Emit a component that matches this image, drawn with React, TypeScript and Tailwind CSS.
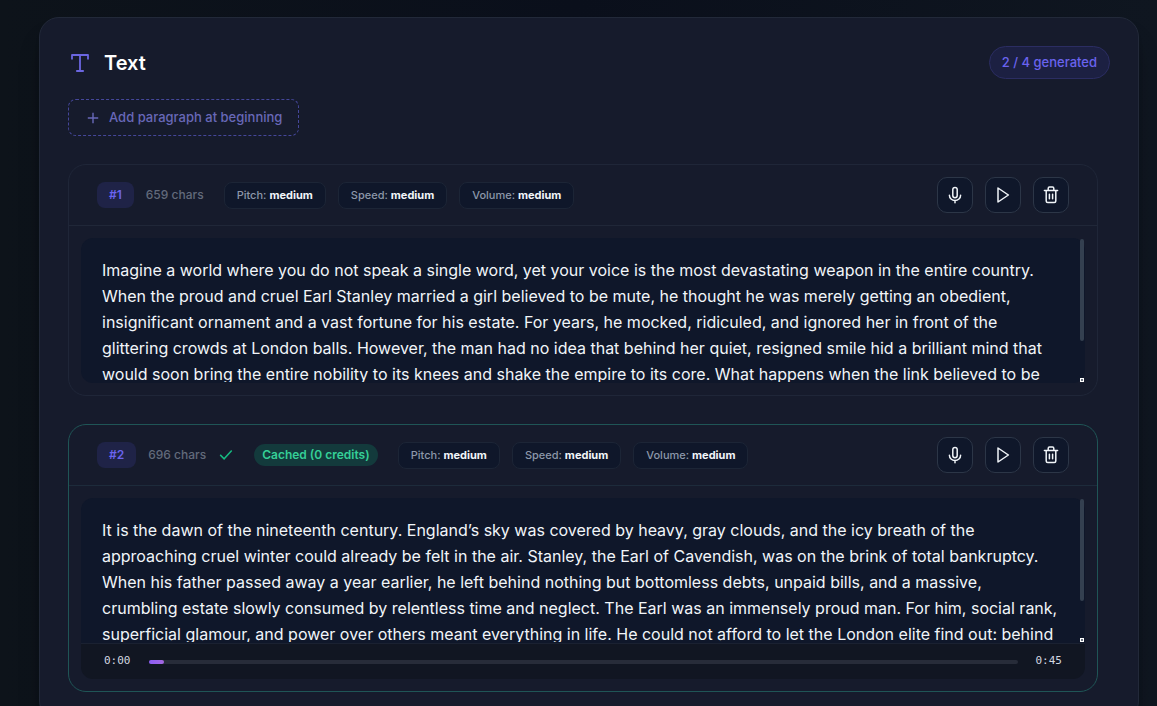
import React, { useState } from 'react';

type IconProps = { className?: string };

type Paragraph = {
  id: number;
  chars: number;
  cached: boolean;
  duration: number | null;
  text: string;
};

const PARAGRAPHS: Paragraph[] = [
  {
    id: 1,
    chars: 659,
    cached: false,
    duration: null,
    text: 'Imagine a world where you do not speak a single word, yet your voice is the most devastating weapon in the entire country. When the proud and cruel Earl Stanley married a girl believed to be mute, he thought he was merely getting an obedient, insignificant ornament and a vast fortune for his estate. For years, he mocked, ridiculed, and ignored her in front of the glittering crowds at London balls. However, the man had no idea that behind her quiet, resigned smile hid a brilliant mind that would soon bring the entire nobility to its knees and shake the empire to its core. What happens when the link believed to be',
  },
  {
    id: 2,
    chars: 696,
    cached: true,
    duration: 45,
    text: 'It is the dawn of the nineteenth century. England’s sky was covered by heavy, gray clouds, and the icy breath of the approaching cruel winter could already be felt in the air. Stanley, the Earl of Cavendish, was on the brink of total bankruptcy. When his father passed away a year earlier, he left behind nothing but bottomless debts, unpaid bills, and a massive, crumbling estate slowly consumed by relentless time and neglect. The Earl was an immensely proud man. For him, social rank, superficial glamour, and power over others meant everything in life. He could not afford to let the London elite find out: behind',
  },
];

const VOICE_SETTINGS = [
  { label: 'Pitch', value: 'medium' },
  { label: 'Speed', value: 'medium' },
  { label: 'Volume', value: 'medium' },
];

const TextIcon = ({ className }: IconProps) => (
  <svg viewBox="0 0 24 24" fill="none" stroke="currentColor" strokeWidth="1.8" strokeLinejoin="round" className={className}>
    <path d="M4 8.6V4h16v4.6M12 4v16M8.2 20h7.6" />
  </svg>
);

const PlusIcon = ({ className }: IconProps) => (
  <svg viewBox="0 0 16 16" fill="none" stroke="currentColor" strokeWidth="1.4" className={className}>
    <path d="M8 2.8v10.4M2.8 8h10.4" />
  </svg>
);

const CheckIcon = ({ className }: IconProps) => (
  <svg viewBox="0 0 16 16" fill="none" stroke="currentColor" strokeWidth="1.5" className={className}>
    <path d="M2.2 7.9l3.9 3.9 7.6-8.2" />
  </svg>
);

const MicIcon = ({ className }: IconProps) => (
  <svg viewBox="0 0 18 18" fill="none" stroke="currentColor" strokeWidth="1.5" strokeLinecap="round" className={className}>
    <rect x="6.8" y="1.4" width="4.4" height="10.4" rx="2.2" />
    <path d="M3.4 9.2a5.6 5.3 0 0 0 11.2 0M9 14.6v2.2" />
  </svg>
);

const PlayIcon = ({ className }: IconProps) => (
  <svg viewBox="0 0 18 18" fill="none" stroke="currentColor" strokeWidth="1.5" strokeLinejoin="round" className={className}>
    <path d="M4 2v14l10.4-7z" />
  </svg>
);

const TrashIcon = ({ className }: IconProps) => (
  <svg viewBox="0 0 18 18" fill="none" stroke="currentColor" strokeWidth="1.5" strokeLinecap="round" className={className}>
    <path d="M2.4 4.4h13.2M6.2 4.2V2.4c0-.8.5-1.3 1.3-1.3h3c.8 0 1.3.5 1.3 1.3v1.8M4.2 4.6v10.3c0 .9.6 1.5 1.5 1.5h6.6c.9 0 1.5-.6 1.5-1.5V4.6M7.4 8.2v4.6M10.6 8.2v4.6" />
  </svg>
);

const ACTIONS = [
  { id: 'record', label: 'Choose voice', icon: MicIcon },
  { id: 'play', label: 'Play', icon: PlayIcon },
  { id: 'delete', label: 'Delete', icon: TrashIcon },
];

const formatTime = (seconds: number) =>
  `${Math.floor(seconds / 60)}:${String(Math.floor(seconds % 60)).padStart(2, '0')}`;

function Player({ duration }: { duration: number }) {
  const [time, setTime] = useState(0);
  // a small piece of the bar stays filled at the start
  const percent = Math.max(1.8, (time / duration) * 100);

  return (
    <div className="flex h-9 items-center gap-[18px] rounded-b-xl border-t border-[#1a2131] bg-[#111622] px-[23px] font-['DejaVu_Sans_Mono',monospace] text-[11px] text-[#d3d8e0]">
      <span>{formatTime(time)}</span>
      <div className="relative h-1 flex-1 rounded-full bg-[#272c39]">
        <div
          className="h-1 rounded-full bg-linear-to-r from-[#8b5cf6] to-[#a467e0]"
          style={{ width: `${percent}%` }}
        />
        <input
          type="range"
          aria-label="Seek"
          min={0}
          max={duration}
          value={time}
          onChange={e => setTime(Number(e.target.value))}
          className="absolute inset-0 h-1 w-full cursor-pointer opacity-0"
        />
      </div>
      <span>{formatTime(duration)}</span>
    </div>
  );
}

function ParagraphEditor({ paragraph }: { paragraph: Paragraph }) {
  const [text, setText] = useState(paragraph.text);
  const [scroll, setScroll] = useState(0);

  return (
    <div className="relative">
      <textarea
        aria-label={`Paragraph ${paragraph.id}`}
        value={text}
        onChange={e => setText(e.target.value)}
        onScroll={e => {
          const el = e.currentTarget;
          setScroll(el.scrollTop / Math.max(1, el.scrollHeight - el.clientHeight));
        }}
        className={`block h-[145px] w-full resize-none [scrollbar-width:none] border border-transparent bg-[#0f172a] pt-[18px] pr-[26px] pb-[45px] pl-5 text-base leading-[26px] text-[#f1f5f9] outline-none ${
          paragraph.duration ? 'rounded-t-xl' : 'rounded-xl'
        }`}
      />
      {/* scroll thumb and resize corner */}
      <div
        className="pointer-events-none absolute top-px right-px h-[102px] w-1 rounded-full bg-[#344050]"
        style={{ transform: `translateY(${scroll * 36}px)` }}
      />
      <div className="pointer-events-none absolute right-px bottom-px flex size-1 items-center justify-center bg-white">
        <div className="size-0.5 bg-[#6b7280]" />
      </div>
    </div>
  );
}

function ParagraphCard({ paragraph }: { paragraph: Paragraph }) {
  return (
    <article className={`rounded-[18px] border ${paragraph.cached ? 'border-[#1f5556]' : 'border-[#1f2638]'}`}>
      <div className={`flex items-center justify-between border-b px-7 py-3 ${paragraph.cached ? 'border-[#1d2b3b]' : 'border-[#202738]'}`}>
        <div className="flex items-center gap-5">
          <div className="flex items-center gap-3 text-xs font-medium">
            <span className="flex h-[26px] items-center rounded-lg bg-[#1f2347] px-3 font-semibold text-[#6a63ee]">
              #{paragraph.id}
            </span>
            <span className="text-[#626a7b]">{paragraph.chars} chars</span>
            {paragraph.cached && <CheckIcon className="size-4 text-[#16b981]" />}
          </div>
          {paragraph.cached && (
            <span className="flex h-[22px] items-center rounded-full bg-[#133a3c] px-2 text-xs font-semibold text-[#35cf97]">
              Cached (0 credits)
            </span>
          )}
          <div className="flex gap-3">
            {VOICE_SETTINGS.map(s => (
              <span
                key={s.label}
                className="flex h-[27px] items-center gap-[3px] rounded-lg border border-[#1c2536] bg-[#0f172a] px-3 text-[11px] font-medium text-[#8c97a9]"
              >
                {s.label}: <strong className="font-bold text-[#f1f5f9]">{s.value}</strong>
              </span>
            ))}
          </div>
        </div>
        <div className="flex gap-3">
          {ACTIONS.map(a => (
            <button
              key={a.id}
              aria-label={a.label}
              className="flex size-9 items-center justify-center rounded-[10px] border border-[#2c3647] bg-[#0f172a] text-[#f1f5f9] hover:bg-[#1a2338]"
            >
              <a.icon className="size-[18px]" />
            </button>
          ))}
        </div>
      </div>
      <div className="p-3">
        <ParagraphEditor paragraph={paragraph} />
        {paragraph.duration && <Player duration={paragraph.duration} />}
      </div>
    </article>
  );
}

export default function App() {
  return (
    <div className="min-h-screen overflow-hidden bg-linear-to-r from-[#0d131a] via-[#0a0f1b] to-[#0f1620] pt-[17px] pr-[18px] pl-[39px] font-[Inter,sans-serif]">
      <main className="rounded-[20px] border border-[#222939] bg-[#161b2c] p-7 shadow-xl shadow-black/30">
        <header className="flex items-center justify-between">
          <h1 className="flex items-center gap-3 text-xl font-semibold text-white">
            <TextIcon className="size-6 text-[#6b66e0]" />
            Text
          </h1>
          <span className="flex h-[33px] items-center rounded-full border border-[#2b2d62] bg-[#1c2042] px-3 text-[13px] font-medium text-[#6a63ee]">
            2 / 4 generated
          </span>
        </header>
        <button className="mt-5 flex h-[37px] items-center gap-2 rounded-lg border border-dashed border-[#45479a] px-4 text-[13px] font-medium text-[#6868b8]">
          <PlusIcon className="size-4" />
          Add paragraph at beginning
        </button>
        <section className="mt-7 flex flex-col gap-7 pr-3">
          {PARAGRAPHS.map(p => (
            <ParagraphCard key={p.id} paragraph={p} />
          ))}
        </section>
      </main>
    </div>
  );
}
